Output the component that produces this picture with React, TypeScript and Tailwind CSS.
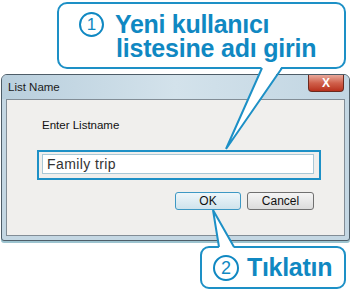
export default function App() {
  return (
    <div className="relative w-[351px] h-[290px] overflow-hidden bg-white font-['Liberation_Sans',Arial,sans-serif]">
      {/* callout 1 */}
      <div className="ml-[57px] mt-[2px] w-[289px] h-[67px] rounded-[10px] border-2 border-[#1d90c6] bg-white pl-[20px] pt-[8px] text-[#1088c2] font-bold">
        <div className="flex items-center gap-[11px] h-[25px]">
          <span className="flex items-center justify-center w-[25px] h-[25px] rounded-full border-2 border-[#1088c2] text-[17px] font-normal leading-none">1</span>
          <span className="text-[25px] leading-[25px] tracking-[-0.3px]">Yeni kullanıcı</span>
        </div>
        <div className="pl-[37px] text-[25px] leading-[22px] tracking-[-0.2px]">listesine adı girin</div>
      </div>

      {/* dialog window */}
      <div className="ml-[1px] mt-[5px] w-[349px] h-[167px] rounded-t-[6px] rounded-b-[3px] border border-[#4e5d68] bg-[#c4d7e3] shadow-[0_2px_0_#9cc3cf] flex flex-col">
        <div className="flex justify-between h-[24px] rounded-t-[5px] bg-gradient-to-r from-[#b9cfdd] via-[#d3e2eb] to-[#c1d5e2]">
          <span className="pl-[6px] pt-[6px] text-[11.5px] leading-[13px] text-[#1b1b1b]">List Name</span>
          <div className="mr-[5px] w-[36px] h-[17px] rounded-b-[4px] border border-t-0 border-[#6b2a1f] bg-gradient-to-b from-[#e7a99c] via-[#d0604b] to-[#b8301c] flex items-center justify-center">
            <span className="text-white font-bold text-[12px] leading-none">X</span>
          </div>
        </div>
        <div className="ml-[4px] w-[339px] h-[137px] border border-[#828d96] bg-[#f0efed]">
          <div className="ml-[35px] mt-[18px] text-[11.5px] leading-[14px] text-[#111]">Enter Listname</div>
          <div className="ml-[30px] mt-[18px] w-[284px] h-[30px] border-2 border-[#1d90c6] pl-[3px] pt-[2px]">
            <div className="w-[272px] h-[20px] border border-[#a9c8d6] bg-white pl-[4px] text-[14px] leading-[18px] tracking-[0.4px] text-[#333]">Family trip</div>
          </div>
          <div className="ml-[168px] mt-[12px] flex gap-[6px]">
            <div className="w-[66px] h-[18px] rounded-[3px] border border-[#3d98c4] bg-gradient-to-b from-[#eef6fa] to-[#cfe3ec] flex items-center justify-center text-[12px] text-[#111]">OK</div>
            <div className="w-[67px] h-[18px] rounded-[3px] border border-[#707070] bg-gradient-to-b from-[#f5f5f5] to-[#dcdcdc] flex items-center justify-center text-[12px] text-[#111]">Cancel</div>
          </div>
        </div>
      </div>

      {/* callout 2 */}
      <div className="ml-[200px] mt-[5px] w-[146px] h-[43px] rounded-[9px] border-2 border-[#1d90c6] bg-white flex items-center pl-[11px] gap-[8px] text-[#1088c2] font-bold">
        <span className="flex items-center justify-center w-[26px] h-[26px] rounded-full border-2 border-[#1088c2] text-[18px] font-normal leading-none">2</span>
        <span className="text-[25px] leading-none tracking-[-0.3px]">Tıklatın</span>
      </div>

      {/* callout pointers */}
      <svg className="absolute inset-0 pointer-events-none" width="351" height="290" viewBox="0 0 351 290">
        <polygon points="262,66 282,66 226,149" fill="#fff" />
        <polyline points="262,68 226,149 282,68" fill="none" stroke="#1d90c6" strokeWidth="2" strokeLinejoin="miter" />
        <polygon points="213,210 219,248 234,248" fill="#fff" />
        <polyline points="219,247 213,210 234,247" fill="none" stroke="#1d90c6" strokeWidth="2" />
      </svg>
    </div>
  );
}
